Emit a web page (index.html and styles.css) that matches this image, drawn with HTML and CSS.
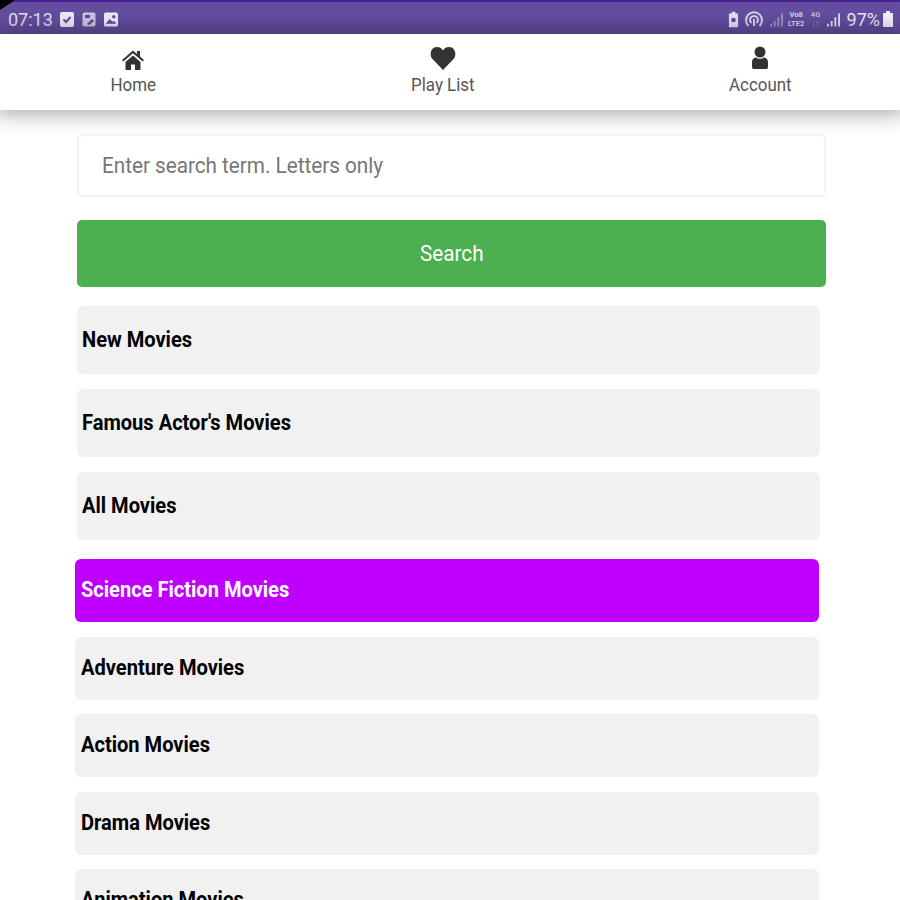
FILE: index.html
```html
<!DOCTYPE html>
<html>

<head>
    <meta charset="UTF-8">
    <title>Movies</title>
    <link rel="stylesheet" href="styles.css">
</head>

<body>
    <div class="statusBar">
        <div class="statusLeft">
            <span class="clock">07:13</span>
            <svg class="statusIcon" viewBox="0 0 14 15"><rect x="0" y="0" width="14" height="15" rx="2" fill="#f1edf8"/><path d="M3.5 7.5l2.5 2.5 4.5-5" fill="none" stroke="#5f4a9c" stroke-width="2"/></svg>
            <svg class="statusIcon" viewBox="0 0 14 15"><rect x="0.5" y="0.5" width="13" height="14" rx="2" fill="#cfc6e6"/><rect x="3" y="3" width="5" height="3" fill="#5f4a9c"/><path d="M5 12l5-5 2 2-5 4z" fill="#5f4a9c"/></svg>
            <svg class="statusIcon" viewBox="0 0 15 15"><rect x="0" y="0" width="15" height="15" rx="2" fill="#f1edf8"/><circle cx="10.5" cy="4.5" r="1.8" fill="#5f4a9c"/><path d="M2 12l4-5 3 3 2-1 2 3z" fill="#5f4a9c"/></svg>
        </div>
        <div class="statusRight">
            <svg class="batterySaver" viewBox="0 0 12 17"><path d="M4 0h4v2h3v15H1V2h3z" fill="#e8e2f4"/><circle cx="6" cy="9" r="2.5" fill="#5f4a9c"/></svg>
            <svg class="hotspot" viewBox="0 0 18 17"><g fill="none" stroke="#d9d2ec" stroke-width="2"><path d="M3.5 15a8 8 0 1 1 11 0"/><path d="M6.5 12a4 4 0 1 1 5 0"/></g><rect x="8" y="8" width="2" height="7" fill="#d9d2ec"/></svg>
            <svg class="signal dim" viewBox="0 0 14 15"><path d="M0 12h2v3H0zM4 9h2v6H4zM8 5h2v10H8zM12 1h2v14h-2z" fill="#cfc6e6"/></svg>
            <span class="netTag">Vo8<br>LTE2</span>
            <span class="netTag thin">4G<br>↓↑</span>
            <svg class="signal" viewBox="0 0 14 15"><path d="M0 12h2v3H0zM4 9h2v6H4zM8 5h2v10H8zM12 1h2v14h-2z" fill="#e4dff2"/></svg>
            <span class="percent">97%</span>
            <svg class="battery" viewBox="0 0 10 16"><path d="M3 0h4v2h3v14H0V2h3z" fill="#f4f1fa"/></svg>
        </div>
    </div>

    <div class="navBar">
        <div class="navItem">
            <svg class="navIcon" width="24" height="20" viewBox="0 0 24 20"><path d="M12 0.5L1 10l1.3 1.5L12 3.2l9.700 8.300L23 10l-4-3.500V1h-3v3z" fill="#333"/><path d="M4.500 12L12 5.500l7.500 6.500v8h-5.500v-5.500h-4V20H4.500z" fill="#333"/></svg>
            <span class="narrow">Home</span>
        </div>
        <div class="navItem">
            <svg class="navIcon" width="26" height="24" viewBox="0 0 26 24"><path d="M13 24L2.500 13C-1 9.300 0.500 1 7 1c3 0 5 1.800 6 3.500C14 2.800 16 1 19 1c6.500 0 8 8.300 4.500 12z" fill="#333"/></svg>
            <span class="narrow">Play List</span>
        </div>
        <div class="navItem">
            <svg class="navIcon" width="18" height="24" viewBox="0 0 18 24"><circle cx="9" cy="6" r="5.500" fill="#333"/><path d="M1 21v-5c0-3 2.500-4.500 4-4.500 1 .8 2.500 1.300 4 1.300s3-.5 4-1.300c1.500 0 4 1.500 4 4.500v5c0 1.500-1 2-2 2H3c-1 0-2-.5-2-2z" fill="#333"/></svg>
            <span class="narrow">Account</span>
        </div>
    </div>

    <div class="content">
        <div class="searchBox"><span class="narrow left">Enter search term. Letters only</span></div>
        <div class="searchButton"><span class="narrow">Search</span></div>

        <div class="catGroup">
            <div class="catItem"><span class="catText">New Movies</span></div>
            <div class="catItem"><span class="catText">Famous Actor's Movies</span></div>
            <div class="catItem"><span class="catText">All Movies</span></div>
        </div>

        <div class="catGroup lower">
            <div class="catItem active"><span class="catText">Science Fiction Movies</span></div>
            <div class="catItem"><span class="catText">Adventure Movies</span></div>
            <div class="catItem"><span class="catText">Action Movies</span></div>
            <div class="catItem"><span class="catText">Drama Movies</span></div>
            <div class="catItem"><span class="catText">Animation Movies</span></div>
        </div>
    </div>
</body>

</html>
```

FILE: styles.css
```css
html,
body {
    margin: 0;
    width: 100%;
    height: 100%;
    overflow: hidden;
    background-color: #ffffff;
    font-family: Roboto, sans-serif;
}

.statusBar {
    box-sizing: border-box;
    height: 34px;
    display: flex;
    justify-content: space-between;
    align-items: center;
    padding: 2px 7px 0 8px;
    background-color: #644ea0;
    border-top: 2px solid #4a1f96;
    color: #e4dff2;
    position: relative;
}

/* dark wedge of the device corner */
.statusBar:before {
    content: "";
    position: absolute;
    top: -2px;
    left: 0;
    width: 15px;
    height: 10px;
    background-color: #000000;
    clip-path: polygon(0 0, 100% 0, 0 100%);
}

.statusLeft,
.statusRight {
    display: flex;
    align-items: center;
}

.clock {
    font-size: 18px;
    margin-right: 8px;
    width: 44px;
}

.statusIcon {
    width: 14px;
    height: 15px;
    margin-right: 8px;
}

.batterySaver {
    width: 11px;
    height: 17px;
    margin-right: 6px;
}

.hotspot {
    width: 18px;
    height: 17px;
    margin-right: 7px;
}

.signal {
    width: 13px;
    height: 15px;
}

.dim {
    opacity: 0.6;
    margin-right: 5px;
}

.netTag {
    width: 17px;
    font-size: 7.5px;
    line-height: 9px;
    font-weight: 700;
    text-align: center;
    margin-right: 5px;
    color: #d9d2ec;
}

.thin {
    width: 12px;
    opacity: 0.8;
}

.percent {
    font-size: 18px;
    margin-left: 7px;
    margin-right: 3px;
    color: #efebf8;
}

.battery {
    width: 10px;
    height: 16px;
}

.navBar {
    height: 76px;
    display: grid;
    grid-template-columns: 266px 354px 280px;
    background-color: #ffffff;
    box-shadow: 0 0 20px 4px rgba(0, 0, 0, 0.35);
    position: relative;
}

.navItem {
    display: flex;
    flex-direction: column;
    align-items: center;
    justify-content: flex-end;
    padding-bottom: 15px;
    font-size: 18px;
    line-height: 20px;
    color: #555555;
}

.navIcon {
    margin-bottom: 5px;
}

.narrow {
    display: inline-block;
    transform: scaleX(0.94);
}

.left {
    transform-origin: left center;
}

.content {
    padding: 24px 0 0 77px;
}

.searchBox {
    box-sizing: border-box;
    width: 749px;
    height: 63px;
    padding-left: 23px;
    display: flex;
    align-items: center;
    border: 2px solid #f3f3f3;
    border-radius: 6px;
    font-size: 22px;
    color: #777777;
}

.searchButton {
    width: 749px;
    height: 67px;
    margin-top: 23px;
    display: flex;
    justify-content: center;
    align-items: center;
    border-radius: 5px;
    background-color: #4caf50;
    color: #ffffff;
    font-size: 22px;
}

.catGroup {
    width: 743px;
    margin-top: 19px;
    display: flex;
    flex-direction: column;
    gap: 15px;
}

.catItem {
    box-sizing: border-box;
    height: 68px;
    padding-left: 5px;
    padding-bottom: 2px;
    display: flex;
    align-items: center;
    border-radius: 6px;
    background-color: #f1f1f1;
    color: #000000;
    font-size: 22px;
    font-weight: 700;
}

.catText {
    display: inline-block;
    transform: scaleX(0.912);
    transform-origin: left center;
}

.lower {
    margin-left: -2px;
    width: 744px;
    gap: 14.5px;
}

.lower .catItem {
    height: 63px;
    padding-left: 6px;
}

.catItem.active {
    background-color: #bf00ff;
    color: #ffffff;
}
```
